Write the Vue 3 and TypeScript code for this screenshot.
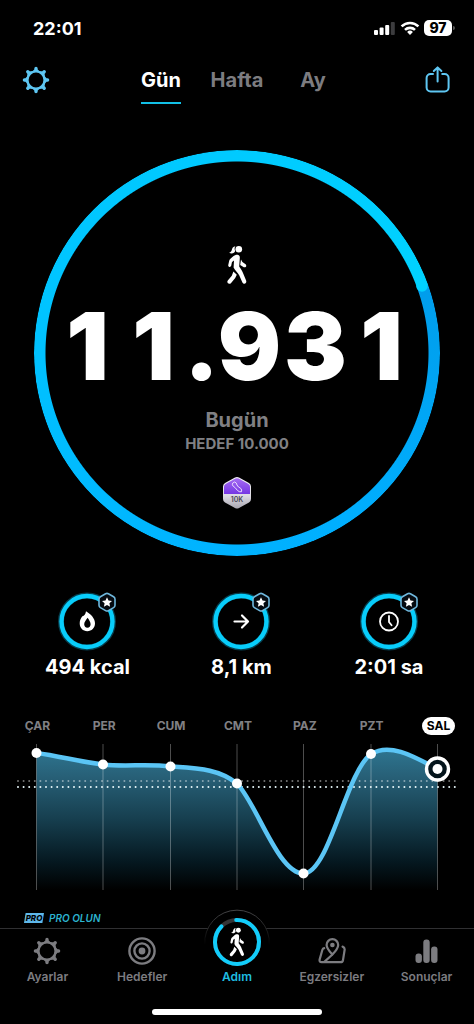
<script setup lang="ts">
interface Stat { id: string; label: string }
interface Day { name: string; x: number; y: number }

const tabs: string[] = ['Gün', 'Hafta', 'Ay']
const activeTab = 'Gün'
const steps = '11.931'

const stats: Stat[] = [
  { id: 'flame', label: '494 kcal' },
  { id: 'arrow', label: '8,1 km' },
  { id: 'clock', label: '2:01 sa' },
]

const days: Day[] = [
  { name: 'ÇAR', x: 36.5, y: 11 },
  { name: 'PER', x: 103, y: 22.5 },
  { name: 'CUM', x: 170.5, y: 24.5 },
  { name: 'CMT', x: 237, y: 41.5 },
  { name: 'PAZ', x: 303.5, y: 131.5 },
  { name: 'PZT', x: 371, y: 12 },
  { name: 'SAL', x: 437.5, y: 27 },
]
const selectedDay = 'SAL'

const curve =
  'M36.5 11 C59 14 81 20 103 22.5 C125 25 148 21.5 170.5 24.5 C200 26.5 219 27 237 41.5 ' +
  'C257 62 278 131.5 303.5 131.5 C329 131.5 346 30 371 12 C390 0 415 15 437.5 27'
const area = curve + ' V148 H36.5 Z'
const teeth: number[] = [0, 45, 90, 135, 180, 225, 270, 315]
</script>

<template>
  <div class="screen">
    <svg class="symbols" aria-hidden="true">
      <symbol id="walker" viewBox="0 0 20 40">
        <circle cx="11.8" cy="4.2" r="3.3" fill="currentColor" />
        <path d="M8.4 1.2 C6 1.4 5.2 3.2 4.8 5 C4.4 6.6 3.4 7.4 2 7.8 C4.6 9 7.6 8.4 8.2 6 C7.4 4.4 7.4 2.6 8.4 1.2Z" fill="currentColor" />
        <path d="M6 11.6 C7.4 10 9.2 9.6 10.6 9.7 C12.6 10 13 11.4 12.8 13.2 L12.2 21.6 C13.8 24 15.4 26 16.2 28.6 L19.2 35.8 C20 38.6 16.8 39.8 15.4 37.4 L12.2 30.2 C10.8 27.6 7.4 25 6.6 22.6 L7 15.6 L5 17 L4.2 20.8 C3.6 22.6 1.2 22.2 1.2 20.2 L2.2 15.8 C2.6 14.2 4.6 12.8 6 11.6Z" fill="currentColor" />
        <path d="M6.4 26.4 L9.8 29.8 L8.2 33 L3.9 38.2 C2 40 -0.8 37.8 .8 35.4 L4.8 30.8Z" fill="currentColor" />
        <path d="M14 14.6 L15.4 17 L18.6 19.2 C20.200 20.8 18.6 23 16.8 22.2 L13.2 20Z" fill="currentColor" />
      </symbol>
      <symbol id="gear" viewBox="0 0 28 28">
        <circle cx="14" cy="14" r="8.6" fill="none" stroke="currentColor" stroke-width="2.4" />
        <g v-for="t in teeth" :key="t" :transform="`rotate(${t} 14 14)`">
          <path d="M9.8 6 L12.3 3.4 V2.400 a1.700 1.700 0 0 1 3.400 0 V3.4 L18.2 6Z" fill="currentColor" />
        </g>
      </symbol>
    </svg>

    <div class="status">
      <span class="time">22:01</span>
      <div class="signals">
        <svg width="22" height="16" viewBox="0 0 22 16" aria-hidden="true">
          <rect x="0" y="10" width="4" height="5" rx="1" fill="#fff" />
          <rect x="5.6" y="7.6" width="4" height="7.4" rx="1" fill="#fff" />
          <rect x="11.2" y="5" width="4" height="10" rx="1" fill="#fff" />
          <rect x="16.8" y="2" width="4" height="13" rx="1" fill="#3c3c3e" />
        </svg>
        <svg width="20" height="16" viewBox="0 0 20 16" aria-hidden="true">
          <g fill="none" stroke="#fff" stroke-width="2.6">
            <path d="M1.6 6.4 A12 12 0 0 1 18.4 6.4" />
            <path d="M5 9.9 A7.2 7.2 0 0 1 15 9.9" />
          </g>
          <path d="M10 15 L7.1 12 A4.2 4.2 0 0 1 12.9 12Z" fill="#fff" />
        </svg>
        <span class="battery">97</span>
      </div>
    </div>

    <header class="top">
      <button class="icon-btn" aria-label="Ayarlar">
        <svg width="28" height="28"><use href="#gear" /></svg>
      </button>
      <div class="tabs" role="tablist">
        <button v-for="t in tabs" :key="t" role="tab" :aria-selected="t === activeTab" class="tab" :class="{ active: t === activeTab }">{{ t }}</button>
      </div>
      <button class="icon-btn" aria-label="Paylaş">
        <svg width="28" height="28" viewBox="0 0 28 28" fill="none" stroke="currentColor" stroke-width="2" stroke-linecap="round" stroke-linejoin="round">
          <path d="M9 8 H6.600 a4 4 0 0 0 -4 4 V21.400 a4 4 0 0 0 4 4 H20.600 a4 4 0 0 0 4 -4 V12 a4 4 0 0 0 -4 -4 H18.200" />
          <path d="M13.600 15.600 V1.600 M9.800 5 L13.600 1.400 L17.400 5" />
        </svg>
      </button>
    </header>

    <main>
      <section class="ring">
        <div class="ring-track"></div>
        <svg class="ring-cap" viewBox="0 0 406 406" aria-hidden="true">
          <circle cx="388" cy="136" r="5.8" fill="#00d2ff" />
        </svg>
        <svg class="walker" width="20" height="40"><use href="#walker" /></svg>
        <strong class="steps"><span v-for="(c, i) in steps" :key="i" :class="c === '.' ? 'dot' : 'digit'">{{ c }}</span></strong>
        <span class="today">Bugün</span>
        <span class="goal">HEDEF 10.000</span>
        <svg class="medal" width="30" height="34" viewBox="0 0 30 34">
          <defs>
            <linearGradient id="violet" x1="0" y1="0" x2="0" y2="1"><stop offset="0" stop-color="#a56cf2" /><stop offset="1" stop-color="#7637e4" /></linearGradient>
            <linearGradient id="silver" x1="0" y1="0" x2="0" y2="1"><stop offset="0" stop-color="#f4f2f8" /><stop offset=".6" stop-color="#dcdae2" /><stop offset="1" stop-color="#aaa8b2" /></linearGradient>
            <clipPath id="half"><rect width="30" height="18" /></clipPath>
          </defs>
          <path d="M13 1.5 Q15 .5 17 1.5 L27 7 Q29 8 29 10.500 V23 Q29 25.500 27 26.500 L17 32 Q15 33 13 32 L3 26.500 Q1 25.500 1 23 V10.500 Q1 8 3 7Z" fill="url(#silver)" />
          <path clip-path="url(#half)" d="M13.400 2.600 Q15 1.800 16.600 2.600 L26.400 8 Q28 9 28 10.800 V18 H2 V10.800 Q2 9 3.600 8Z" fill="url(#violet)" />
          <path d="M10.600 7.200 L12.600 6 Q14.800 6.600 15 9 Q16 11.200 18.800 12.400 Q20.200 14 19.400 15.800 Q17.200 16.200 15.400 14.400 Q13.400 11.400 11.200 10.200 Q9.800 8.800 10.600 7.200Z" fill="none" stroke="#ecdcff" stroke-width="1" />
          <text x="15" y="25.500" text-anchor="middle" class="medal-text">10K</text>
        </svg>
      </section>

      <section class="stats">
        <div v-for="s in stats" :key="s.id" class="stat">
          <svg width="60" height="60" viewBox="0 0 60 60" aria-hidden="true">
            <circle cx="30" cy="30.500" r="26" fill="none" stroke="#063d4c" stroke-width="6" />
            <circle cx="30" cy="30.500" r="25.500" fill="none" stroke="#08cdfb" stroke-width="4.400" />
            <path v-if="s.id === 'flame'" fill="#fff" fill-rule="evenodd" d="M29 20.200 C34 23 38 27.500 38 32.300 C38 37 34.600 40.200 30.300 40.200 C26 40.200 22.700 37 22.700 32.300 C22.700 29.500 23.800 27.300 25.400 25.200 C27.200 24.800 28.600 23 29 20.200Z M30.600 26.800 C29.200 29 27.200 30.800 27.200 33.300 C27.200 35.200 28.500 36.800 30.400 36.800 C32.400 36.800 33.600 35.200 33.600 33.300 C33.600 30.800 32 29 30.600 26.800Z" />
            <path v-else-if="s.id === 'arrow'" d="M23.500 30.500 H36.500 M31 24.500 L37 30.500 L31 36.500" fill="none" stroke="#fff" stroke-width="2.200" stroke-linecap="round" stroke-linejoin="round" />
            <g v-else fill="none" stroke="#fff" stroke-width="1.800" stroke-linecap="round">
              <circle cx="30" cy="30.500" r="9" />
              <path d="M30 25 V31 L32.600 34.200" />
            </g>
            <path d="M48.600 2.800 Q50 2 51.400 2.800 L56.600 5.800 Q58 6.600 58 8.200 V14.200 Q58 15.800 56.600 16.600 L51.400 19.600 Q50 20.400 48.600 19.600 L43.400 16.600 Q42 15.800 42 14.200 V8.200 Q42 6.600 43.400 5.800Z" fill="#050a10" stroke="#6fb7dc" stroke-width="1.600" />
            <path d="M50 6.200 L51.500 9.500 L55 9.900 L52.400 12.300 L53.100 15.800 L50 14 L46.900 15.800 L47.600 12.300 L45 9.900 L48.500 9.500Z" fill="#fff" />
          </svg>
          <strong>{{ s.label }}</strong>
        </div>
      </section>

      <section class="week">
        <div class="days">
          <span v-for="d in days" :key="d.name" class="day"><span :class="{ selected: d.name === selectedDay }">{{ d.name }}</span></span>
        </div>
        <svg class="chart" viewBox="0 0 474 150" role="img" aria-label="Haftalık adımlar">
          <defs>
            <linearGradient id="fade" x1="0" y1="0" x2="0" y2="1">
              <stop offset="0" stop-color="#2e7590" />
              <stop offset=".2" stop-color="#275f76" />
              <stop offset=".5" stop-color="#163e4e" />
              <stop offset=".8" stop-color="#051820" />
              <stop offset="1" stop-color="#000" />
            </linearGradient>
          </defs>
          <path :d="area" fill="url(#fade)" />
          <line v-for="d in days" :key="d.name" :x1="d.x" :x2="d.x" y1="2" y2="148" stroke="#fff" stroke-opacity=".3" />
          <g fill="none" stroke-linecap="round" stroke-width="2" stroke-dasharray="0 5.600">
            <path d="M18 39 H456" stroke="#fff" stroke-opacity=".45" />
            <path d="M18 45 H456" stroke="#e8f8fb" />
          </g>
          <path :d="curve" fill="none" stroke="#5bc5f5" stroke-width="4.500" />
          <template v-for="d in days" :key="d.name">
            <circle v-if="d.name === selectedDay" :cx="d.x" :cy="d.y" r="11" fill="#04141b" stroke="#fff" stroke-width="3.400" />
            <circle :cx="d.x" :cy="d.y" r="5" fill="#fff" />
          </template>
        </svg>
      </section>

      <a class="pro" href="#pro"><span class="pro-tag"><b>PRO</b></span><span>PRO OLUN</span></a>
    </main>

    <nav class="bar">
      <button class="item">
        <svg width="28" height="28"><use href="#gear" /></svg>
        <span>Ayarlar</span>
      </button>
      <button class="item">
        <svg width="28" height="28" viewBox="0 0 28 28" fill="none" stroke="currentColor" stroke-width="2.400">
          <circle cx="14" cy="14" r="12.600" /><circle cx="14" cy="14" r="7.600" /><circle cx="14" cy="14" r="3.400" fill="currentColor" stroke="none" />
        </svg>
        <span>Hedefler</span>
      </button>
      <button class="item current">
        <svg class="bump" width="66" height="66" viewBox="0 0 66 66">
          <defs><linearGradient id="edge" x1="0" y1="0" x2="0" y2="1"><stop offset="0" stop-color="#444446" /><stop offset="1" stop-color="#000" /></linearGradient></defs>
          <circle cx="33" cy="33" r="32" fill="#000" />
          <path d="M.800 36 A32.300 32.300 0 1 1 65.200 36" fill="none" stroke="url(#edge)" />
          <circle cx="33" cy="33" r="22" fill="none" stroke="#343436" stroke-width="4" />
          <circle cx="33" cy="33" r="22" fill="none" stroke="#12cdfb" stroke-width="4" stroke-linecap="round" pathLength="100" stroke-dasharray="88 12" transform="rotate(-2 33 33) rotate(-90 33 33)" />
          <use href="#walker" x="25" y="18" width="16" height="30" color="#fff" />
        </svg>
        <span>Adım</span>
      </button>
      <button class="item">
        <svg width="28" height="28" viewBox="0 0 28 28" fill="none" stroke="currentColor" stroke-width="2.200" stroke-linecap="round" stroke-linejoin="round">
          <path d="M14.400 17.600 C11.500 14.400 8.600 11.400 8.600 8 a5.800 5.800 0 0 1 11.600 0 C20.200 11.400 17.400 14.400 14.400 17.600Z" />
          <circle cx="14.400" cy="8" r="1.200" />
          <path d="M6.200 11.200 Q4.800 11.400 4.400 12.800 L1.600 22.600 Q1.200 25.200 3.600 25.200 H22.600 Q24.600 25.200 25 23.200 L26.600 13 Q27 10.400 24.600 9.600" />
          <path d="M6.600 24.600 L14.200 17.800" />
        </svg>
        <span>Egzersizler</span>
      </button>
      <button class="item">
        <svg width="28" height="28" viewBox="0 0 28 28" fill="currentColor">
          <rect x="2.500" y="16.500" width="6.400" height="9.500" rx="3" /><rect x="10.300" y="2.500" width="6.400" height="23.500" rx="3" /><rect x="18.100" y="9.500" width="6.400" height="16.500" rx="3" />
        </svg>
        <span>Sonuçlar</span>
      </button>
    </nav>
    <div class="home"></div>
  </div>
</template>

<style>
body {
  background: #000;
}
</style>

<style scoped>
.screen {
  background: #000;
  color: #fff;
  font-family: Inter, "Liberation Sans", sans-serif;
  overflow: hidden;
}
.symbols {
  position: absolute;
  width: 0;
  height: 0;
}
svg {
  display: block;
}
button {
  background: none;
  border: 0;
  padding: 0;
  margin: 0;
  font: inherit;
  color: inherit;
}
.status {
  height: 56px;
  padding: 0 22px 0 33px;
  display: flex;
  align-items: center;
  justify-content: space-between;
}
.time {
  font-size: 18px;
  font-weight: 700;
}
.signals {
  display: flex;
  align-items: center;
  gap: 4px;
}
.battery {
  width: 28px;
  height: 16px;
  border-radius: 5px;
  background: #fff;
  color: #000;
  font-size: 14px;
  font-weight: 800;
  line-height: 16px;
  text-align: center;
  position: relative;
}
.battery::after {
  content: "";
  position: absolute;
  left: 29px;
  top: 6px;
  width: 2px;
  height: 4px;
  border-radius: 0 2px 2px 0;
  background: #555;
}
.top {
  display: flex;
  align-items: center;
  justify-content: space-between;
  height: 48px;
  padding: 0 22px;
}
.icon-btn {
  color: #5ec6f2;
}
.tabs {
  display: grid;
  grid-template-columns: repeat(3, 76px);
  justify-items: center;
}
.tab {
  height: 48px;
  padding: 2px 0 0;
  border-bottom: 2px solid transparent;
  color: #7c7c80;
  font-size: 20px;
  font-weight: 700;
}
.tab.active {
  color: #fff;
  border-bottom-color: #12c0e6;
}
.ring {
  position: relative;
  display: flex;
  flex-direction: column;
  align-items: center;
  margin: 46px 34px 0;
  aspect-ratio: 1;
}
.ring-track,
.ring-cap {
  position: absolute;
  inset: 0;
}
.ring-track {
  border-radius: 50%;
  background: conic-gradient(from 70deg, #009deb, #00aefe 20%, #00b4ff 35%, #00c4ff 60%, #00caff 80%, #00d2ff 100%);
  mask: radial-gradient(closest-side, transparent calc(100% - 12px), #000 calc(100% - 11px));
}
.walker {
  margin-top: 95px;
}
.steps {
  display: flex;
  margin-top: 4px;
  padding-right: 5px;
  font-size: 94px;
  line-height: 114px;
  font-weight: 900;
}
.digit,
.dot {
  display: flex;
  justify-content: center;
}
.digit {
  width: 66px;
}
.dot {
  width: 30px;
}
.today {
  margin-top: 5px;
  color: #808084;
  font-size: 20px;
  line-height: 24px;
  font-weight: 700;
}
.goal {
  margin-top: 2px;
  color: #808084;
  font-size: 15px;
  line-height: 20px;
  font-weight: 700;
}
.medal {
  margin-top: 22px;
}
.medal-text {
  font-size: 7px;
  font-weight: 600;
  fill: #4b4856;
}
.stats {
  display: flex;
  justify-content: space-between;
  margin-top: 35px;
  padding: 0 49px 0 45px;
}
.stat {
  display: flex;
  flex-direction: column;
  align-items: center;
  min-width: 72px;
}
.stat strong {
  margin-top: 4px;
  font-size: 20px;
  line-height: 24px;
  font-weight: 700;
}
.week {
  margin-top: 38px;
}
.days {
  display: grid;
  grid-template-columns: repeat(7, 1fr);
  padding: 0 2px 0 4px;
}
.day {
  display: flex;
  justify-content: center;
  color: #808084;
  font-size: 12px;
  line-height: 18px;
  font-weight: 700;
}
.selected {
  padding: 0 5px;
  border-radius: 9px;
  background: #fff;
  color: #000;
}
.chart {
  width: 100%;
  height: auto;
  margin-top: 7px;
}
.pro {
  display: flex;
  align-items: center;
  gap: 5px;
  margin: 20px 0 0 24px;
  height: 12px;
  color: #2cb4d0;
  font-size: 10px;
  font-style: italic;
  font-weight: 600;
  text-decoration: none;
}
.pro-tag {
  width: 20px;
  height: 10px;
  background: #5fb8ea;
  color: #000;
  font-size: 8px;
  line-height: 10px;
  text-align: center;
  clip-path: polygon(8% 0, 100% 0, 92% 100%, 0 100%);
}
.pro-tag b {
  font-weight: 800;
}
.bar {
  display: grid;
  grid-template-columns: repeat(5, 1fr);
  margin-top: 4px;
  border-top: 1px solid #303032;
}
.item {
  display: flex;
  flex-direction: column;
  align-items: center;
  padding-top: 8px;
  color: #7c7c80;
  font-size: 12px;
  line-height: 16px;
  font-weight: 600;
}
.item span {
  margin-top: 4px;
}
.bump {
  margin-top: -28px;
}
.item .bump + span {
  margin-top: -6px;
}
.current {
  color: #1fbde0;
}
.home {
  width: 36%;
  height: 6px;
  margin: 24px auto 6px;
  border-radius: 3px;
  background: #fff;
}
</style>
